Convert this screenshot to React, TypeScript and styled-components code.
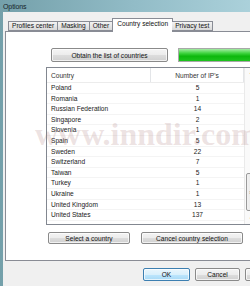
import styled, { createGlobalStyle } from 'styled-components';

const Global = createGlobalStyle`
    html, body {
        margin: 0;
        padding: 0;
        overflow: hidden;
        background: #f0f0f0;
    }
    body {
        font-family: "Liberation Sans", Arial, sans-serif;
    }
`;

const Window = styled.div`
    position: relative;
    width: 300px;
    height: 286px;
    display: flex;
    flex-direction: column;
    padding-left: 3px;
    box-sizing: border-box;
    background: linear-gradient(to right, #74a0aa, #92bcc7 45%, #b6dae3);
    overflow: hidden;
`;

const TitleBar = styled.div`
    height: 12px;
    font-size: 7px;
    line-height: 13px;
    color: #15232a;
    letter-spacing: -0.1px;
`;

const Client = styled.div`
    flex: 1;
    display: flex;
    flex-direction: column;
    background: #f0f0f0;
    padding: 6px 0 0 2px;
`;

const TabStrip = styled.div`
    display: flex;
    align-items: flex-end;
    height: 13px;
    padding-left: 3px;
    position: relative;
    z-index: 1;
`;

const Tab = styled.div<{ active?: boolean }>`
    box-sizing: border-box;
    height: ${({ active }) => (active ? '14px' : '10px')};
    margin-bottom: ${({ active }) => (active ? '-1px' : '0')};
    margin-left: ${({ active }) => (active ? '-1px' : '0')};
    margin-right: ${({ active }) => (active ? '-1px' : '0')};
    padding: ${({ active }) => (active ? '1px 4px 0' : '0 3px')};
    border: 1px solid #898c95;
    border-bottom: ${({ active }) => (active ? 'none' : '1px solid #898c95')};
    border-left: ${({ active }) => (active ? '1px solid #898c95' : 'none')};
    background: ${({ active }) =>
        active ? '#ffffff' : 'linear-gradient(to bottom, #f3f3f3, #e6e6e6 50%, #d9d9d9)'};
    font-size: 6.6px;
    line-height: 8px;
    color: #111;
    white-space: nowrap;

    &:first-child {
        border-left: 1px solid #898c95;
    }
`;

const Panel = styled.div`
    box-sizing: border-box;
    height: 230px;
    background: #ffffff;
    border: 1px solid #898c95;
    padding: 16px 0 0 40px;
    display: flex;
    flex-direction: column;
`;

const TopRow = styled.div`
    display: flex;
    gap: 10px;
    margin-left: 5px;
    height: 14px;
`;

const Button = styled.div<{ w: number; def?: boolean }>`
    box-sizing: border-box;
    width: ${({ w }) => w}px;
    height: 100%;
    border: 1px solid ${({ def }) => (def ? '#3c7fb1' : '#8a8a8a')};
    border-radius: 2px;
    background: ${({ def }) =>
        def
            ? 'linear-gradient(to bottom, #eaf6fd, #d9f0fc 50%, #bee6fd 51%, #a7d9f5)'
            : 'linear-gradient(to bottom, #f4f4f4, #ececec 50%, #dddddd 51%, #d0d0d0)'};
    box-shadow: inset 0 0 0 1px rgba(255, 255, 255, 0.7);
    display: flex;
    align-items: center;
    justify-content: center;
    font-size: 6.6px;
    color: #111;
    white-space: nowrap;
`;

const Progress = styled.div`
    flex: 1;
    box-sizing: border-box;
    border: 1px solid #a8a8a8;
    background: linear-gradient(to bottom, #a4eca4, #3fd43f 35%, #0cb80c 60%, #1ec41e);
`;

const List = styled.div`
    margin-top: 5px;
    box-sizing: border-box;
    height: 158px;
    border: 1px solid #828790;
    display: flex;
    background: #fff;
`;

const Table = styled.div`
    width: 197px;
    display: flex;
    flex-direction: column;
`;

const Header = styled.div`
    display: grid;
    grid-template-columns: 104px 93px;
    height: 14px;
    font-size: 6.6px;
    color: #333;
    border-bottom: 1px solid #ececec;
`;

const HeadCell = styled.div<{ center?: boolean }>`
    display: flex;
    align-items: center;
    justify-content: ${({ center }) => (center ? 'center' : 'flex-start')};
    padding-left: ${({ center }) => (center ? '0' : '4px')};
    border-right: 1px solid #e3e5e8;
`;

const Row = styled.div`
    display: grid;
    grid-template-columns: 104px 93px;
    height: 10.6px;
    font-size: 6.6px;
    line-height: 10.6px;
    color: #1a1a1a;
    box-shadow: inset 0 -1px 0 #f4f4f4;
`;

const Cell = styled.div<{ center?: boolean }>`
    text-align: ${({ center }) => (center ? 'center' : 'left')};
    padding-left: ${({ center }) => (center ? '0' : '4px')};
    white-space: nowrap;
`;

const ScrollBar = styled.div`
    width: 12px;
    display: flex;
    flex-direction: column;
    align-items: center;
    background: #fafafa;
    border-left: 1px solid #eaeaea;
`;

const Arrow = styled.div`
    font-size: 4px;
    line-height: 10px;
    height: 10px;
    color: #444;
`;

const Track = styled.div`
    flex: 1;
    width: 100%;
    display: flex;
    flex-direction: column;
    justify-content: flex-end;
    padding-bottom: 3px;
    box-sizing: border-box;
`;

const Thumb = styled.div`
    box-sizing: border-box;
    height: 38px;
    margin: 0 1px;
    border: 1px solid #9a9a9a;
    border-radius: 2px;
    background: linear-gradient(to right, #f2f2f2, #e0e0e0);
    display: flex;
    align-items: center;
    justify-content: center;
    font-size: 5px;
    color: #666;
`;

const ButtonRow = styled.div`
    display: flex;
    gap: 11px;
    margin: 7px 0 0 2px;
    height: 12px;
`;

const Footer = styled.div`
    display: flex;
    gap: 5px;
    padding: 7px 0 0 138px;
    height: 13px;
`;

const Watermark = styled.div`
    position: absolute;
    left: 35px;
    top: 116px;
    font-family: "Liberation Serif", "Times New Roman", serif;
    font-weight: bold;
    font-size: 32px;
    color: rgba(160, 110, 110, 0.2);
    pointer-events: none;
    white-space: nowrap;
`;

const countries: [string, number][] = [
    ['Poland', 5],
    ['Romania', 1],
    ['Russian Federation', 14],
    ['Singapore', 2],
    ['Slovenia', 1],
    ['Spain', 5],
    ['Sweden', 22],
    ['Switzerland', 7],
    ['Taiwan', 5],
    ['Turkey', 1],
    ['Ukraine', 1],
    ['United Kingdom', 13],
    ['United States', 137],
];

const tabs = ['Profiles center', 'Masking', 'Other', 'Country selection', 'Privacy test'];

const App = () => {
    return (
        <Window>
            <Global />
            <TitleBar>Options</TitleBar>
            <Client>
                <TabStrip>
                    {tabs.map((t) => (
                        <Tab key={t} active={t === 'Country selection'}>
                            {t}
                        </Tab>
                    ))}
                </TabStrip>
                <Panel>
                    <TopRow>
                        <Button w={117}>Obtain the list of countries</Button>
                        <Progress />
                    </TopRow>
                    <List>
                        <Table>
                            <Header>
                                <HeadCell>Country</HeadCell>
                                <HeadCell center>Number of IP's</HeadCell>
                            </Header>
                            {countries.map(([name, n]) => (
                                <Row key={name}>
                                    <Cell>{name}</Cell>
                                    <Cell center>{n}</Cell>
                                </Row>
                            ))}
                        </Table>
                        <ScrollBar>
                            <Arrow>▲</Arrow>
                            <Track>
                                <Thumb>≡</Thumb>
                            </Track>
                            <Arrow>▼</Arrow>
                        </ScrollBar>
                    </List>
                    <ButtonRow>
                        <Button w={82}>Select a country</Button>
                        <Button w={102}>Cancel country selection</Button>
                    </ButtonRow>
                </Panel>
                <Footer>
                    <Button w={47} def>
                        OK
                    </Button>
                    <Button w={45}>Cancel</Button>
                    <Button w={45}>Apply</Button>
                </Footer>
            </Client>
            <Watermark>www.inndir.com</Watermark>
        </Window>
    );
};

export default App;
